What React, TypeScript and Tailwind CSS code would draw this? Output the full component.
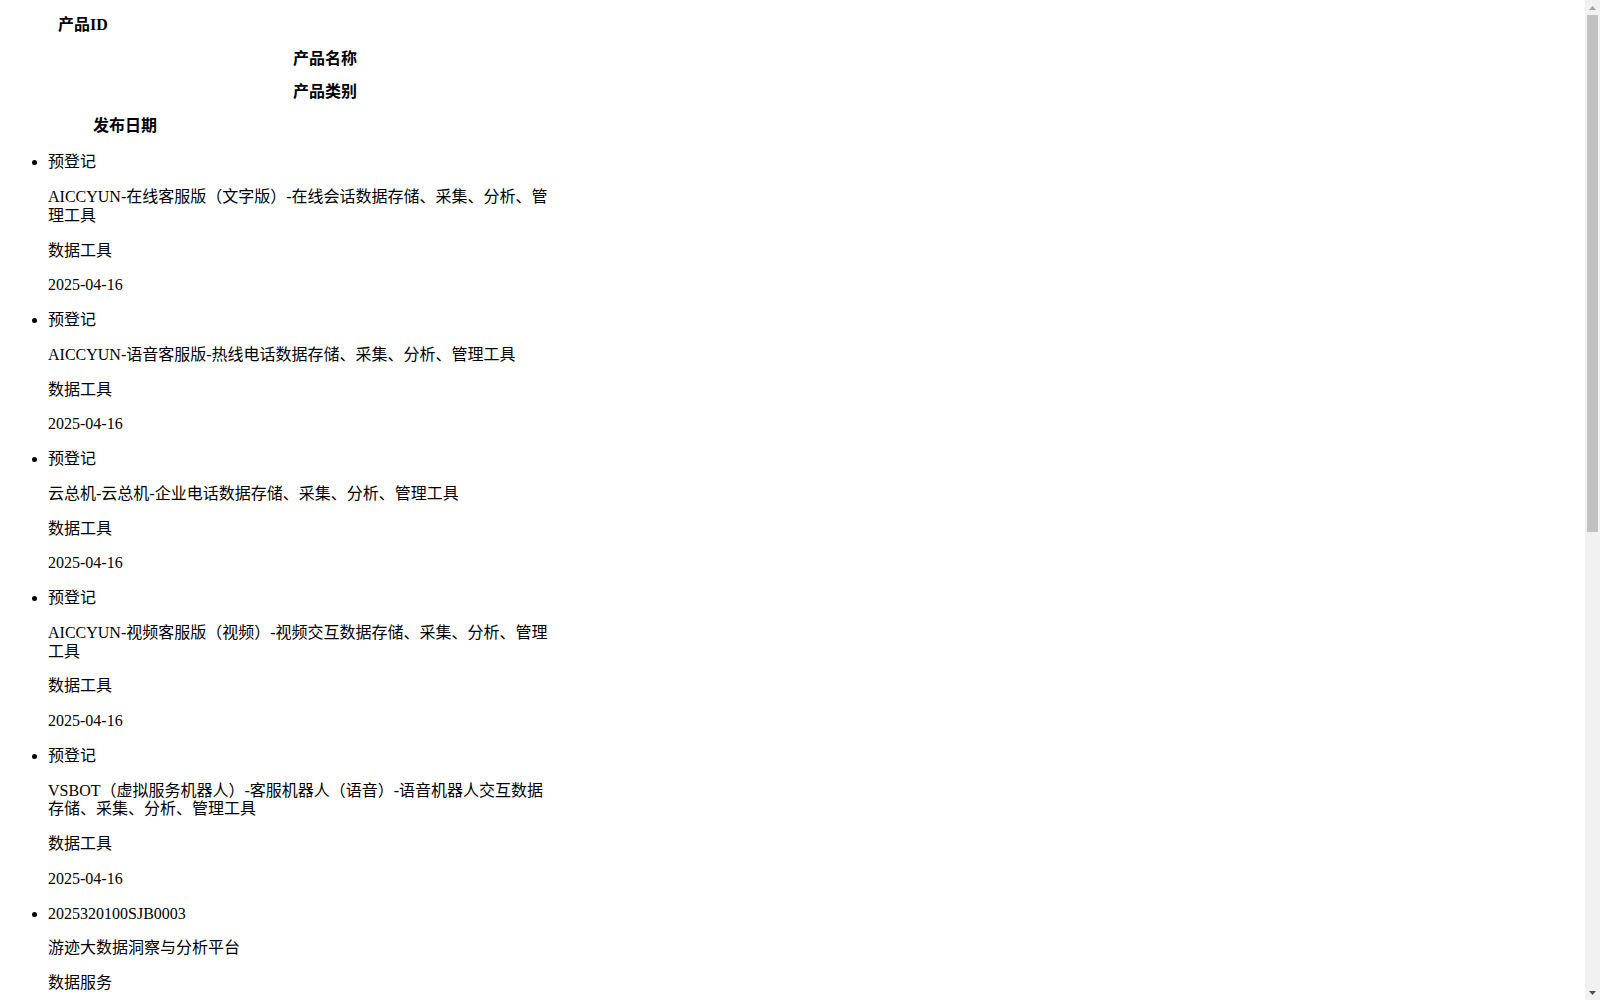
import React from "react";

type Item = { id: string; name: string; category: string; date: string };

const items: Item[] = [
  { id: "预登记", name: "AICCYUN-在线客服版（文字版）-在线会话数据存储、采集、分析、管理工具", category: "数据工具", date: "2025-04-16" },
  { id: "预登记", name: "AICCYUN-语音客服版-热线电话数据存储、采集、分析、管理工具", category: "数据工具", date: "2025-04-16" },
  { id: "预登记", name: "云总机-云总机-企业电话数据存储、采集、分析、管理工具", category: "数据工具", date: "2025-04-16" },
  { id: "预登记", name: "AICCYUN-视频客服版（视频）-视频交互数据存储、采集、分析、管理工具", category: "数据工具", date: "2025-04-16" },
  { id: "预登记", name: "VSBOT（虚拟服务机器人）-客服机器人（语音）-语音机器人交互数据存储、采集、分析、管理工具", category: "数据工具", date: "2025-04-16" },
  { id: "2025320100SJB0003", name: "游迹大数据洞察与分析平台", category: "数据服务", date: "2025-04-15" },
  { id: "2025320100SJB0002", name: "城市交通出行数据分析平台", category: "数据服务", date: "2025-04-15" },
  { id: "2025320100SJB0001", name: "企业信用数据查询服务", category: "数据服务", date: "2025-04-14" },
  { id: "2025320100SJC0005", name: "公共气象数据集", category: "数据集", date: "2025-04-14" },
  { id: "2025320100SJC0004", name: "商业地理位置数据集", category: "数据集", date: "2025-04-13" },
  { id: "2025320100SJC0003", name: "电商消费行为分析报告", category: "数据报告", date: "2025-04-12" },
  { id: "2025320100SJC0002", name: "产业链图谱数据产品", category: "数据集", date: "2025-04-11" },
];

function Scrollbar() {
  return (
    <div className="flex h-full w-[15px] shrink-0 flex-col bg-[#f1f1f1]">
      <div className="flex h-[15px] items-center justify-center">
        <svg width="7" height="4" viewBox="0 0 7 4">
          <polygon points="3.5,0 7,4 0,4" fill="#a3a3a3" />
        </svg>
      </div>
      <div className="flex-1 px-[2px]">
        <div className="h-[517px] bg-[#c1c1c1]" />
      </div>
      <div className="flex h-[15px] items-center justify-center">
        <svg width="7" height="4" viewBox="0 0 7 4">
          <polygon points="0,0 7,0 3.5,4" fill="#505050" />
        </svg>
      </div>
    </div>
  );
}

export default function App() {
  return (
    <div className="flex h-screen overflow-hidden bg-white">
      <main className="min-w-0 flex-1 overflow-hidden">
        <div className="px-2 text-base text-black font-['Liberation_Serif','Noto_Sans_CJK_SC',serif] leading-[18.75px]">
          <div className="leading-[17.7px]">
            <p className="my-4 pl-[50px] font-bold">产品ID</p>
            <p className="my-4 pl-[285px] font-bold">产品名称</p>
            <p className="my-4 pl-[285px] font-bold">产品类别</p>
            <p className="my-4 pl-[85px] font-bold">发布日期</p>
          </div>
          <ul className="mt-[18.5px] mb-4 w-[545px] list-disc pl-10">
            {items.map((it, i) => (
              <li key={i}>
                <p className="my-4">{it.id}</p>
                <p className="my-4">{it.name}</p>
                <p className="my-4">{it.category}</p>
                <p className="my-4">{it.date}</p>
              </li>
            ))}
          </ul>
        </div>
      </main>
      <Scrollbar />
    </div>
  );
}
